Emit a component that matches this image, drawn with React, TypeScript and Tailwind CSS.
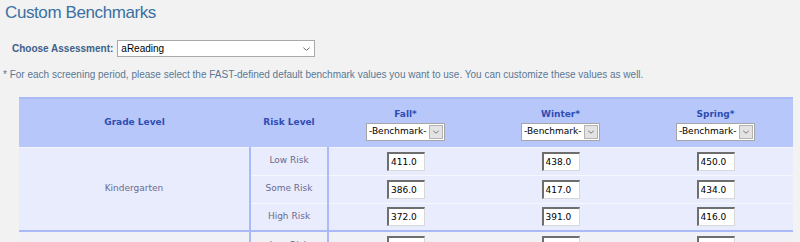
import React from 'react';

type Group = {
  grade: string;
  rows: { risk: string; values: string[] }[];
};

const groups: Group[] = [
  {
    grade: 'Kindergarten',
    rows: [
      { risk: 'Low Risk', values: ['411.0', '438.0', '450.0'] },
      { risk: 'Some Risk', values: ['386.0', '417.0', '434.0'] },
      { risk: 'High Risk', values: ['372.0', '391.0', '416.0'] },
    ],
  },
  {
    grade: 'Grade 1',
    rows: [
      { risk: 'Low Risk', values: ['442.0', '463.0', '474.0'] },
      { risk: 'Some Risk', values: ['425.0', '445.0', '456.0'] },
      { risk: 'High Risk', values: ['405.0', '425.0', '438.0'] },
    ],
  },
];

const Chevron: React.FC<{ className?: string }> = ({ className }) => (
  <svg viewBox="0 0 10 6" className={className} fill="none">
    <path d="M1.5 1.5 L5 4.5 L8.5 1.5" stroke="#6b6b6b" strokeWidth="1.1" />
  </svg>
);

const BenchmarkSelect: React.FC = () => (
  <div className="mx-auto flex h-[18px] w-[79px] items-center border border-[#a6a6a6] bg-white">
    <span className="flex-1 whitespace-nowrap pl-[2px] text-left text-[9px] font-normal leading-none text-black">-Benchmark-</span>
    <span className="mr-[1px] flex h-[14px] w-[14px] shrink-0 items-center justify-center border border-[#b4b4b4] bg-[#e3e3e3]">
      <Chevron className="h-[6px] w-[8px]" />
    </span>
  </div>
);

const ValueInput: React.FC<{ value: string }> = ({ value }) => (
  <input
    readOnly
    defaultValue={value}
    className="mx-auto block h-[19px] w-[38px] border-t-2 border-l-2 border-r border-b border-t-[#6e6e6e] border-l-[#6e6e6e] border-r-[#d8d8d8] border-b-[#d8d8d8] bg-white pl-[2px] text-[9px] text-black outline-none"
  />
);

export default function App() {
  return (
    <div className="min-h-screen bg-[#f2f2f2] font-['Liberation_Sans',Arial,sans-serif]">
      <h1 className="pl-[5px] pt-[2px] text-[17px] leading-[22px] tracking-[-0.4px] text-[#3a70a3]">Custom Benchmarks</h1>

      <div className="mt-[16px] flex items-center pl-[12px]">
        <label className="text-[10px] font-bold text-[#3d6189]">Choose Assessment:</label>
        <div className="ml-[4px] flex h-[17px] w-[198px] items-center border border-[#a9a9a9] bg-white pl-[3px] pr-[3px]">
          <span className="flex-1 text-[10px] text-black">aReading</span>
          <Chevron className="h-[6px] w-[9px]" />
        </div>
      </div>

      <p className="mt-[12px] pl-[3px] text-[10px] leading-[12px] text-[#5a7896]">
        * For each screening period, please select the FAST-defined default benchmark values you want to use. You can customize these values as well.
      </p>

      <table className="ml-[19px] mt-[16px] w-[774px] border-collapse font-['DejaVu_Sans',Verdana,sans-serif] text-[9px]">
        <colgroup>
          <col className="w-[231px]" />
          <col className="w-[78px]" />
          <col className="w-[155px]" />
          <col className="w-[155px]" />
          <col className="w-[155px]" />
        </colgroup>
        <thead>
          <tr className="h-[49px] border-t-2 border-b border-t-[#a9baf7] border-b-[#f3f5ff] bg-[#b8c7fa] text-[#2f4db3]">
            <th className="text-center align-middle font-bold">Grade Level</th>
            <th className="text-center align-middle font-bold">Risk Level</th>
            {['Fall*', 'Winter*', 'Spring*'].map((s) => (
              <th key={s} className="pt-[4px] text-center align-middle font-bold">
                <div className="mb-[3px] leading-[11px]">{s}</div>
                <BenchmarkSelect />
              </th>
            ))}
          </tr>
        </thead>
        <tbody>
          {groups.map((g, gi) =>
            g.rows.map((r, ri) => (
              <tr
                key={`${gi}-${ri}`}
                className={`h-[28px] ${gi % 2 === 0 ? 'bg-[#e8ecfd]' : 'bg-[#f0f1f7]'} ${
                  ri === g.rows.length - 1 ? 'border-b-2 border-b-[#a9baf7]' : 'border-b border-b-[#f6f7ff]'
                }`}
              >
                {ri === 0 && (
                  <td rowSpan={g.rows.length} className="text-center align-middle text-[#6b6a8e]">
                    {g.grade}
                  </td>
                )}
                <td className="border-x-2 border-x-[#aabaf6] text-center align-middle text-[#6b6a8e]">{r.risk}</td>
                {r.values.map((v, vi) => (
                  <td key={vi} className="text-center align-middle">
                    <ValueInput value={v} />
                  </td>
                ))}
              </tr>
            ))
          )}
        </tbody>
      </table>
    </div>
  );
}
